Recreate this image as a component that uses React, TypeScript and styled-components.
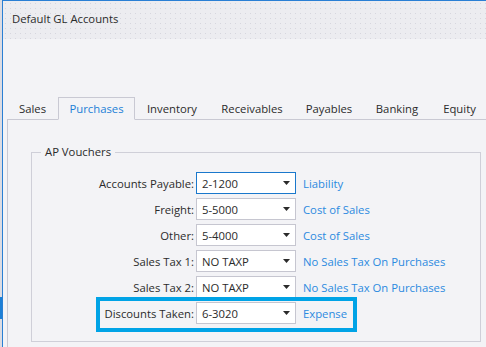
import React from 'react';
import styled, { createGlobalStyle } from 'styled-components';

const GlobalStyle = createGlobalStyle`
  html, body {
    margin: 0;
    padding: 0;
  }
  body {
    width: 486px;
    height: 347px;
    overflow: hidden;
    background: #e4e4ea;
    font-family: "Open Sans", "Noto Sans", sans-serif;
    font-size: 11.3px;
    color: #2b2b2b;
  }
`;

const Screen = styled.div`
  display: flex;
  height: 347px;
`;

const Backdrop = styled.div`
  width: 2px;
  flex-shrink: 0;
  background: #dcdce3;
`;

const BackdropThumb = styled.div`
  margin-top: 297px;
  height: 22px;
  background: #1c7fd6;
`;

const Window = styled.div`
  flex: 1;
  min-width: 0;
  display: flex;
  flex-direction: column;
  border-top: 1px solid #2a7fd4;
  border-left: 1px solid #2a7fd4;
  background: #f3f3f6;
`;

const TitleBar = styled.div`
  height: 38px;
  box-sizing: border-box;
  padding: 10px 0 0 9px;
  line-height: 16px;
  background-color: #ececf0;
  background-image: radial-gradient(#d6d6de 0.6px, transparent 0.9px);
  background-size: 5px 5px;
`;

const Body = styled.div`
  flex: 1;
  display: flex;
  flex-direction: column;
  padding-top: 58px;
`;

const TabStrip = styled.div`
  display: flex;
  margin-left: 4px;
  height: 22px;
  border-bottom: 1px solid #c9c9d3;
`;

const Tab = styled.div<{ $active?: boolean; $width: number }>`
  flex-shrink: 0;
  box-sizing: border-box;
  width: ${p => p.$width}px;
  height: 23px;
  line-height: 21px;
  text-align: center;
  white-space: nowrap;
  border: 1px solid ${p => (p.$active ? '#c9c9d3' : 'transparent')};
  border-bottom-color: ${p => (p.$active ? '#f3f3f6' : 'transparent')};
  background: ${p => (p.$active ? '#f3f3f6' : 'transparent')};
  color: ${p => (p.$active ? '#1b7fd6' : '#2b2b2b')};
  position: relative;
  z-index: 1;
`;

const Panel = styled.div`
  flex: 1;
  margin-left: 4px;
  border-left: 1px solid #c9c9d3;
  padding: 24px 0 0 23px;
`;

const GroupBox = styled.fieldset`
  margin: 0;
  padding: 0;
  width: 450px;
  box-sizing: border-box;
  border: 1px solid #cfcfd8;
`;

const GroupTitle = styled.legend`
  margin-left: 9px;
  padding: 0 4px;
  line-height: 16px;
`;

const Rows = styled.div`
  display: flex;
  flex-direction: column;
  gap: 4px;
  padding: 12px 0 17px;
`;

const Row = styled.div`
  position: relative;
  display: grid;
  grid-template-columns: 162px 100px auto;
  column-gap: 2px;
  align-items: center;
  height: 22px;
`;

const Label = styled.span`
  text-align: right;
  white-space: nowrap;
`;

const Select = styled.div<{ $focused?: boolean }>`
  box-sizing: border-box;
  height: 22px;
  display: flex;
  align-items: center;
  justify-content: space-between;
  padding: 0 5px;
  background: #fff;
  border: 1px solid ${p => (p.$focused ? '#1a78cc' : '#c6c6d0')};
`;

const AccountType = styled.span`
  margin-left: 5px;
  color: #2b8ae0;
  white-space: nowrap;
`;

const Highlight = styled.div`
  position: absolute;
  left: 64px;
  top: -5px;
  width: 261px;
  height: 35px;
  box-sizing: border-box;
  border: 4px solid #00a3e6;
  pointer-events: none;
`;

function Arrow() {
  return (
    <svg width="7" height="4" viewBox="0 0 7 4">
      <polygon points="0,0 7,0 3.5,4" fill="#2b2b2b" />
    </svg>
  );
}

const tabs = [
  { name: 'Sales', width: 51 },
  { name: 'Purchases', width: 77 },
  { name: 'Inventory', width: 74 },
  { name: 'Receivables', width: 86 },
  { name: 'Payables', width: 68 },
  { name: 'Banking', width: 68 },
  { name: 'Equity', width: 57 },
];

const accounts = [
  { label: 'Accounts Payable:', value: '2-1200', type: 'Liability' },
  { label: 'Freight:', value: '5-5000', type: 'Cost of Sales' },
  { label: 'Other:', value: '5-4000', type: 'Cost of Sales' },
  { label: 'Sales Tax 1:', value: 'NO TAXP', type: 'No Sales Tax On Purchases' },
  { label: 'Sales Tax 2:', value: 'NO TAXP', type: 'No Sales Tax On Purchases' },
  { label: 'Discounts Taken:', value: '6-3020', type: 'Expense' },
];

export default function App() {
  return (
    <>
      <GlobalStyle />
      <Screen>
        <Backdrop>
          <BackdropThumb />
        </Backdrop>
        <Window>
          <TitleBar>Default GL Accounts</TitleBar>
          <Body>
            <TabStrip>
              {tabs.map(tab => (
                <Tab key={tab.name} $width={tab.width} $active={tab.name === 'Purchases'}>
                  {tab.name}
                </Tab>
              ))}
            </TabStrip>
            <Panel>
              <GroupBox>
                <GroupTitle>AP Vouchers</GroupTitle>
                <Rows>
                  {accounts.map((account, index) => (
                    <Row key={account.label}>
                      <Label>{account.label}</Label>
                      <Select $focused={index === 0}>
                        {account.value}
                        <Arrow />
                      </Select>
                      <AccountType>{account.type}</AccountType>
                      {index === accounts.length - 1 && <Highlight />}
                    </Row>
                  ))}
                </Rows>
              </GroupBox>
            </Panel>
          </Body>
        </Window>
      </Screen>
    </>
  );
}
